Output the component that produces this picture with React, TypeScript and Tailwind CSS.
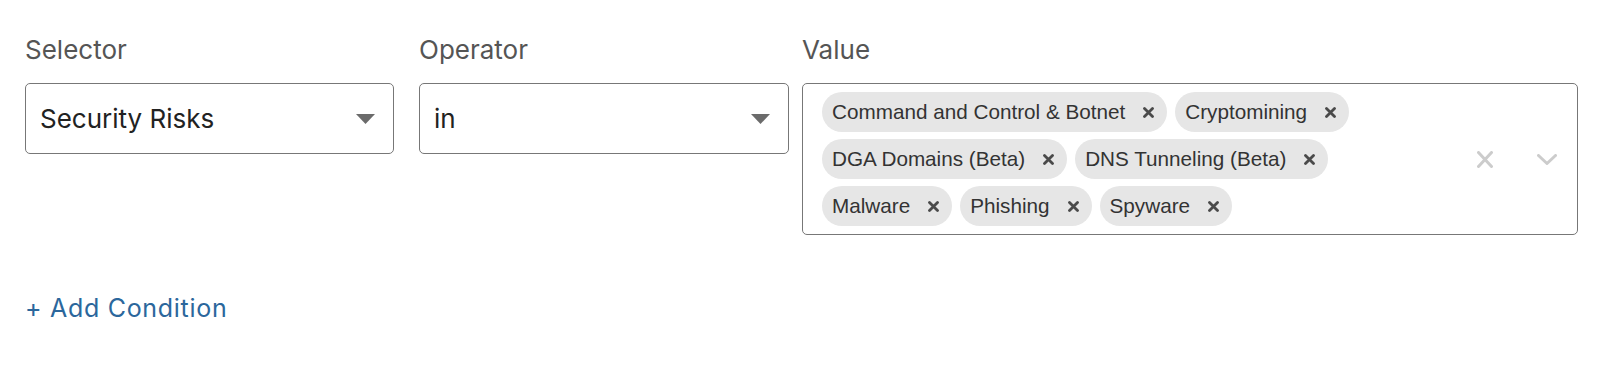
import React from "react";

const chips: string[][] = [
  ["Command and Control & Botnet", "Cryptomining"],
  ["DGA Domains (Beta)", "DNS Tunneling (Beta)"],
  ["Malware", "Phishing", "Spyware"],
];

function Triangle() {
  return (
    <svg width="19" height="10" viewBox="0 0 19 10" className="shrink-0">
      <path d="M0 0 L19 0 L9.5 10 Z" fill="#6b6b6b" />
    </svg>
  );
}

function ChipX() {
  return (
    <svg width="11" height="11" viewBox="0 0 11 11" className="shrink-0">
      <path d="M1.5 1.5 L9.5 9.5 M9.5 1.5 L1.5 9.5" stroke="#4a4a4a" strokeWidth="2.8" strokeLinecap="round" />
    </svg>
  );
}

function Chip({ label }: { label: string }) {
  return (
    <div className="flex h-[40px] items-center rounded-full bg-[#e6e6e6] pl-[10px] pr-[13px]">
      <span className="text-[20.7px] leading-none text-[#333]" style={{ fontFamily: '"Liberation Sans", Arial, sans-serif' }}>
        {label}
      </span>
      <span className="ml-[18px] flex items-center">
        <ChipX />
      </span>
    </div>
  );
}

export default function App() {
  return (
    <div
      className="w-[1600px] h-[372px] bg-white pl-[25px] pt-[35px]"
      style={{ fontFamily: "Inter, 'Noto Sans', sans-serif" }}
    >
      <div className="flex items-start">
        <div className="w-[369px] shrink-0">
          <div className="text-[26px] leading-[30px] text-[#555]">Selector</div>
          <div className="mt-[18px] flex h-[71px] items-center justify-between rounded-[5px] border border-[#777] pl-[14px] pr-[18px]">
            <span className="text-[26px] text-[#222]">Security Risks</span>
            <Triangle />
          </div>
        </div>
        <div className="ml-[25px] w-[370px] shrink-0">
          <div className="text-[26px] leading-[30px] text-[#555]">Operator</div>
          <div className="mt-[18px] flex h-[71px] items-center justify-between rounded-[5px] border border-[#777] pl-[14px] pr-[18px]">
            <span className="text-[26px] text-[#222]">in</span>
            <Triangle />
          </div>
        </div>
        <div className="ml-[13px] w-[776px] shrink-0">
          <div className="text-[26px] leading-[30px] text-[#555]">Value</div>
          <div className="mt-[18px] flex h-[152px] items-center rounded-[5px] border border-[#777] pl-[19px] pr-[20px]">
            <div className="flex min-w-0 flex-1 flex-col gap-[7px]">
              {chips.map((row, i) => (
                <div key={i} className="flex gap-[8px]">
                  {row.map((c) => (
                    <Chip key={c} label={c} />
                  ))}
                </div>
              ))}
            </div>
            <svg width="16" height="17" viewBox="0 0 16 17" className="shrink-0">
              <path d="M1.5 1.5 L14.5 15.5 M14.5 1.5 L1.5 15.5" stroke="#cccccc" strokeWidth="3" strokeLinecap="round" />
            </svg>
            <svg width="20" height="11" viewBox="0 0 20 11" className="ml-[44px] shrink-0">
              <path d="M1.5 1.5 L10 9.5 L18.5 1.5" stroke="#cccccc" strokeWidth="3" fill="none" strokeLinecap="round" strokeLinejoin="round" />
            </svg>
          </div>
        </div>
      </div>
      <div className="mt-[58px] text-[25px] leading-[30px] tracking-[0.7px] text-[#2b679c]">+ Add Condition</div>
    </div>
  );
}
